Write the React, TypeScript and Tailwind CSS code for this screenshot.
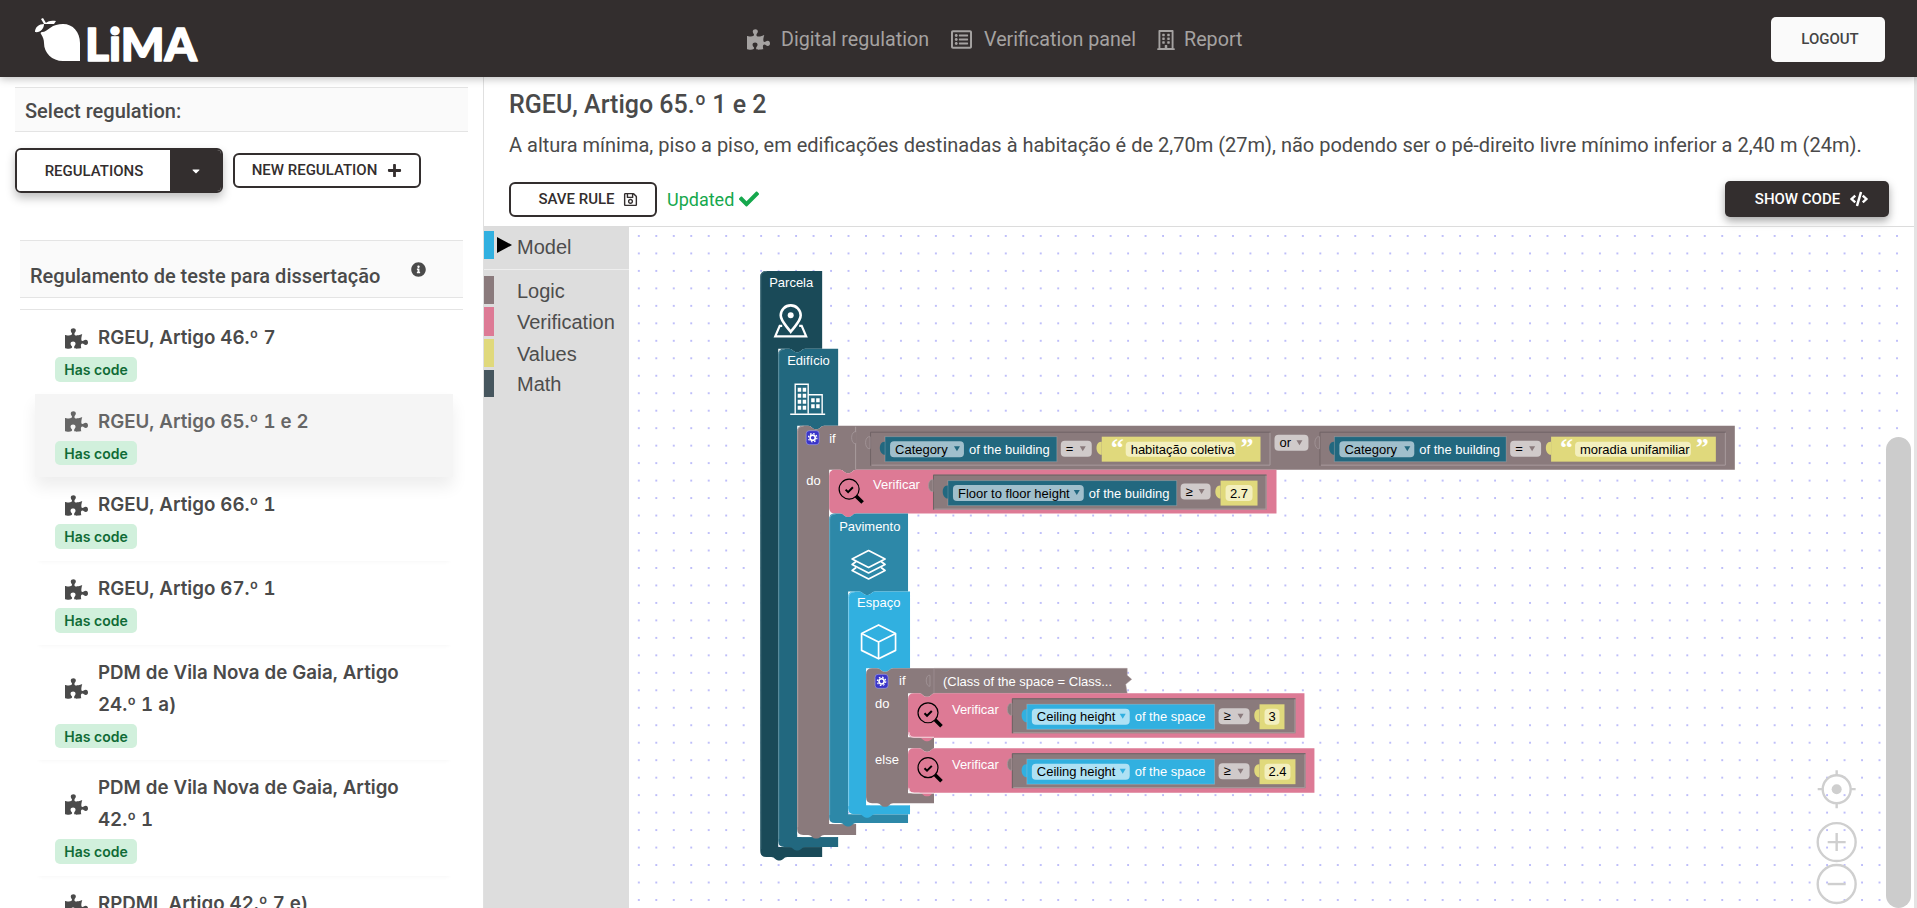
import React from 'react';
import { FaPuzzlePiece, FaRegListAlt, FaRegBuilding, FaPlus, FaInfoCircle, FaCaretDown, FaRegSave, FaCheck, FaCode } from 'react-icons/fa';

const LOGIC = '#8a7a7c';
const VERIFY = '#dd7a95';
const VALUE = '#e0d97c';
const DEEP = '#1a4a58';
const BUILDING = '#22687f';
const STOREY = '#2d88a8';
const SPACE = '#31b0e0';

const items = [
  { title: 'RGEU, Artigo 46.º 7' },
  { title: 'RGEU, Artigo 65.º 1 e 2', active: true },
  { title: 'RGEU, Artigo 66.º 1' },
  { title: 'RGEU, Artigo 67.º 1' },
  { title: 'PDM de Vila Nova de Gaia, Artigo 24.º 1 a)' },
  { title: 'PDM de Vila Nova de Gaia, Artigo 42.º 1' },
  { title: 'RPDML Artigo 42.º 7 e)' },
];

const toolbox = [
  { name: 'Logic', color: 'bg-[#8a7a7c]', h: 'h-[28px]' },
  { name: 'Verification', color: 'bg-[#dd7a95]', h: 'h-[29px]' },
  { name: 'Values', color: 'bg-[#e0d97c]', h: 'h-[28px]' },
  { name: 'Math', color: 'bg-[#46565e]', h: 'h-[27px]' },
];

// top edge notch and bottom tab of a statement block
const notch = 'q2.5 0 4 2 q1.5 1.5 3 1.5 h2 q1.5 0 3 -1.5 q1.5 -2 4 -2';
const tab = 'q-2.5 0 -4 2 q-1.5 1.5 -3 1.5 h-2 q-1.5 0 -3 -1.5 q-1.5 -2 -4 -2';

type CProps = { x: number; top: number; right: number; headBottom: number; inner: number; footTop: number; bottom: number; footRight: number; fill: string; hl: string; hat?: boolean };

const CBlock = ({ x, top, right, headBottom, inner, footTop, bottom, footRight, fill, hl, hat }: CProps) => (
  <g>
    <path
      d={`M${x + 6} ${top} ${hat ? '' : `H${x + 11} ${notch}`} H${right} V${headBottom} H${inner + 27} ${tab} H${inner} V${footTop} H${footRight} V${bottom} H${x + 27} ${tab} H${x + 6} Q${x} ${bottom} ${x} ${bottom - 6} V${top + 6} Q${x} ${top} ${x + 6} ${top} Z`}
      fill={fill}
    />
    <path d={`M${inner + 0.5} ${headBottom + 4} V${footTop - 4} q0 3.5 4 3.5 H${footRight - 1}`} fill="none" stroke="#fff" strokeOpacity="0.75" />
    <path d={`M${x + 0.5} ${bottom - 8} V${top + 6} q0 -5.5 6 -5.5`} fill="none" stroke={hl} />
  </g>
);

const Label = ({ x, y, children, fill = '#fff', size = 13 }: { x: number; y: number; children: React.ReactNode; fill?: string; size?: number }) => (
  <text x={x} y={y} fill={fill} fontSize={size} fontFamily="'Liberation Sans', Arial, sans-serif">
    {children}
  </text>
);

// grey frame that a value block sits in
const Frame = ({ x, y, w, h }: { x: number; y: number; w: number; h: number }) => (
  <g>
    <rect x={x} y={y} width={w} height={h} fill={LOGIC} />
    <path d={`M${x + 0.5} ${y + h} V${y + 0.5} H${x + w}`} fill="none" stroke="#6f6264" />
    <path d={`M${x + 1.5} ${y + h - 0.5} H${x + w - 0.5} V${y + 1}`} fill="none" stroke="#a99c9e" />
    <path d={`M${x} ${y + 5} c-6 -1 -6 13 0 12 Z`} fill={LOGIC} stroke="#a99c9e" strokeWidth="0.7" />
  </g>
);

const Arrow = ({ x, y, fill }: { x: number; y: number; fill: string }) => <polygon points={`${x - 3},${y - 2.5} ${x + 3},${y - 2.5} ${x},${y + 2.5}`} fill={fill} />;

const Variable = ({ x, w, y, field, fieldW, suffix, fill, fieldFill }: { x: number; w: number; y: number; field: string; fieldW: number; suffix: string; fill: string; fieldFill: string }) => (
  <g>
    <path d={`M${x} ${y + 5} c-7 -1 -7 13 0 13 Z`} fill={fill} />
    <rect x={x} y={y} width={w} height={25} fill={fill} stroke="#ffffff" strokeOpacity="0.18" />
    <rect x={x + 5} y={y + 4.5} width={fieldW} height={16} rx={4} fill={fieldFill} />
    <Label x={x + 10} y={y + 17} fill="#000">{field}</Label>
    <Arrow x={x + fieldW - 2} y={y + 12} fill={fill} />
    <Label x={x + fieldW + 10} y={y + 17}>{suffix}</Label>
  </g>
);

const Operator = ({ x, y, w, sign }: { x: number; y: number; w: number; sign: string }) => (
  <g>
    <rect x={x} y={y} width={w} height={16} rx={4} fill="#d0caca" />
    <Label x={x + 5} y={y + 12} fill="#000">{sign}</Label>
    <Arrow x={x + w - 9} y={y + 8} fill="#8a7a7c" />
  </g>
);

const TextValue = ({ x, w, y, text }: { x: number; w: number; y: number; text: string }) => (
  <g>
    <path d={`M${x} ${y + 5} c-7 -1 -7 13 0 13 Z`} fill={VALUE} />
    <rect x={x} y={y} width={w} height={25} fill={VALUE} />
    <text x={x + 9} y={y + 19} fill="#fff" fontSize="26" fontWeight="700" fontFamily="'Liberation Serif', serif">“</text>
    <rect x={x + 24} y={y + 5} width={w - 49} height={15} rx={4} fill="#f3efbe" />
    <Label x={x + 29} y={y + 17} fill="#000">{text}</Label>
    <text x={x + w - 20} y={y + 19} fill="#fff" fontSize="26" fontWeight="700" fontFamily="'Liberation Serif', serif">”</text>
  </g>
);

const NumValue = ({ x, w, y, text }: { x: number; w: number; y: number; text: string }) => (
  <g>
    <path d={`M${x} ${y + 5} c-7 -1 -7 13 0 13 Z`} fill={VALUE} />
    <rect x={x} y={y} width={w} height={25} fill={VALUE} />
    <rect x={x + 5} y={y + 4.5} width={w - 10} height={16} rx={4} fill="#f3efbe" />
    <text x={x + w / 2} y={y + 17} fill="#000" fontSize="13" textAnchor="middle" fontFamily="'Liberation Sans', Arial, sans-serif">{text}</text>
  </g>
);

const Gear = ({ x, y }: { x: number; y: number }) => (
  <g>
    <rect x={x} y={y} width={13} height={14} rx={3} fill="#3a35c9" stroke="#a8a4ee" strokeWidth="0.6" />
    <circle cx={x + 6.5} cy={y + 7} r={2.6} fill="none" stroke="#fff" strokeWidth="1.6" />
    <circle cx={x + 6.5} cy={y + 7} r={4.2} fill="none" stroke="#fff" strokeWidth="1.2" strokeDasharray="1.6 1.7" />
  </g>
);

const Magnifier = ({ x, y }: { x: number; y: number }) => (
  <g transform={`translate(${x} ${y})`} fill="none" stroke="#000">
    <circle cx={11} cy={10.5} r={10} strokeWidth="1.2" />
    <path d="M7.5 11 l2.5 2.5 l4.8 -4.8" strokeWidth="2" />
    <path d="M18 17.5 l6.5 6.5" strokeWidth="3.6" />
  </g>
);

const Verify = ({ top, right, frameW, valueW, value }: { top: number; right: number; frameW: number; valueW: number; value: string }) => (
  <g>
    <path
      d={`M914 ${top} H919 ${notch} H${right} V${top + 44.5} H935 ${tab} H914 Q908 ${top + 44.5} 908 ${top + 38.5} V${top + 6} Q908 ${top} 914 ${top} Z`}
      fill={VERIFY}
    />
    <Magnifier x={917} y={top + 9} />
    <Label x={952} y={top + 21}>Verificar</Label>
    <Frame x={1012} y={top + 5} w={frameW} h={35} />
    <Variable x={1027} w={188} y={top + 11} field="Ceiling height" fieldW={98} suffix="of the space" fill={SPACE} fieldFill="#aee1f4" />
    <Operator x={1219} y={top + 15} w={31} sign="≥" />
    <NumValue x={1260} w={valueW} y={top + 11} text={value} />
  </g>
);

const Blocks = () => (
  <svg className="block w-full h-full" viewBox="630 226 1284 682">
    <defs>
      <pattern id="dots" patternUnits="userSpaceOnUse" x="7.4" y="6.5" width="17.5" height="17.5">
        <circle cx="1" cy="1" r="0.8" fill="#6a6af2" />
      </pattern>
    </defs>
    <rect x="630" y="226" width="1284" height="682" fill="url(#dots)" />

    {/* Parcela */}
    <CBlock hat x={760} top={270} right={822} headBottom={348} inner={778} footTop={847} bottom={857} footRight={822} fill={DEEP} hl="#4b7480" />
    <Label x={769} y={286}>Parcela</Label>
    <g fill="none" stroke="#fff" strokeWidth="2.6">
      <path d="M790.5 331 c-6 -8 -10 -11 -10 -16.5 a10 10 0 0 1 20 0 c0 5.5 -4 8.5 -10 16.5 Z" />
      <circle cx="790.5" cy="314.5" r="3" fill="#fff" stroke="none" />
      <path d="M782 325 H779.5 L775 335.5 H806 L801.5 325 H799" strokeWidth="2.2" />
    </g>

    {/* Edificio */}
    <CBlock x={778} top={348} right={838} headBottom={425} inner={797} footTop={837} bottom={847} footRight={838} fill={BUILDING} hl="#5c8d9d" />
    <Label x={787} y={364}>Edifício</Label>
    <g fill="none" stroke="#fff" strokeWidth="1.4">
      <path d="M795 413 V383.5 H808 V413" />
      <path d="M808 394 H822 V413" />
      <path d="M790 413.5 H825" strokeWidth="1.6" />
    </g>
    <g fill="#fff">
      {[387, 393, 399, 405].map(y => (
        <g key={y}>
          <rect x="797.5" y={y} width="3.5" height="4" />
          <rect x="802.5" y={y} width="3.5" height="4" />
        </g>
      ))}
      {[397.5, 403.5].map(y => (
        <g key={y}>
          <rect x="811" y={y} width="3.5" height="4" />
          <rect x="816" y={y} width="3.5" height="4" />
        </g>
      ))}
    </g>

    {/* Se (edificio) */}
    <CBlock x={797} top={425} right={1736} headBottom={469} inner={829} footTop={824} bottom={835} footRight={856} fill={LOGIC} hl="#a99c9e" />
    <Gear x={806} y={430} />
    <Label x={829} y={442}>if</Label>
    <Label x={806} y={484}>do</Label>
    <path d="M855.5 426 V469" stroke="#a99c9e" fill="none" />
    <path d="M856 431 c-6 -1 -6 13 0 12" stroke="#a99c9e" fill={LOGIC} strokeWidth="0.7" />

    <Frame x={870} y={431} w={401} h={34} />
    <Variable x={885} w={172} y={436} field="Category" fieldW={74} suffix="of the building" fill={BUILDING} fieldFill="#a0bfcc" />
    <Operator x={1061} y={440} w={31} sign="=" />
    <TextValue x={1102} w={159} y={436} text="habitação coletiva" />
    <Operator x={1275} y={434} w={34} sign="or" />

    <Frame x={1320} y={431} w={407} h={34} />
    <Variable x={1335} w={172} y={436} field="Category" fieldW={75} suffix="of the building" fill={BUILDING} fieldFill="#a0bfcc" />
    <Operator x={1511} y={440} w={31} sign="=" />
    <TextValue x={1552} w={165} y={436} text="moradia unifamiliar" />

    {/* Verificar (edificio) */}
    <path
      d={`M835 469 H840 ${notch} H1277 V513 H856 ${tab} H835 Q829 513 829 507 V475 Q829 469 835 469 Z`}
      fill={VERIFY}
    />
    <Magnifier x={838} y={478} />
    <Label x={873} y={488}>Verificar</Label>
    <Frame x={933} y={474} w={334} h={35} />
    <Variable x={948} w={229} y={480} field="Floor to floor height" fieldW={131} suffix="of the building" fill={BUILDING} fieldFill="#a0bfcc" />
    <Operator x={1181} y={483} w={30} sign="≥" />
    <NumValue x={1221} w={37} y={480} text="2.7" />

    {/* Pavimento */}
    <CBlock x={829} top={513} right={908} headBottom={591} inner={848} footTop={814} bottom={823} footRight={908} fill={STOREY} hl="#64a8c0" />
    <Label x={839} y={530}>Pavimento</Label>
    <g fill="none" stroke="#fff" strokeWidth="1.7" strokeLinejoin="round">
      <path d="M868.5 550 L885 558.5 L868.5 567 L852 558.5 Z" />
      <path d="M856 561 L852 564 L868.5 572.5 L885 564 L881 561" />
      <path d="M856 567 L852 570 L868.5 578.5 L885 570 L881 567" />
    </g>

    {/* Espaco */}
    <CBlock x={848} top={591} right={910} headBottom={668} inner={866} footTop={805} bottom={814} footRight={910} fill={SPACE} hl="#7ccdeb" />
    <Label x={857} y={607}>Espaço</Label>
    <g fill="none" stroke="#fff" strokeWidth="1.7" strokeLinejoin="round">
      <path d="M878.5 624.5 L895.5 633 V650 L878.5 658.5 L861.5 650 V633 Z" />
      <path d="M861.5 633 L878.5 641.5 L895.5 633 M878.5 641.5 V658.5" />
    </g>

    {/* Se (espaco) */}
    <path
      d={`M872 668 H877 ${notch} H934 V693 H935 ${tab} H908 V737 H934 V748 H935 ${tab} H908 V793 H934 V803 H893 ${tab} H872 Q866 803 866 797 V674 Q866 668 872 668 Z`}
      fill={LOGIC}
    />
    <Gear x={875} y={674} />
    <Label x={899} y={685}>if</Label>
    <Label x={875} y={708}>do</Label>
    <Label x={875} y={764}>else</Label>
    <path d="M934 668 H1127.5 V675 L1132 679 L1126 684 L1127.5 693 H934 Z" fill={LOGIC} stroke="#a99c9e" strokeWidth="0.5" />
    <path d="M930 675 c-5 -1 -5 11 0 11 Z" fill={LOGIC} stroke="#a99c9e" strokeWidth="0.7" />
    <Label x={943} y={686}>(Class of the space = Class...</Label>

    <Verify top={693} right={1305} frameW={284} valueW={25} value="3" />
    <Verify top={748} right={1315} frameW={294} valueW={36} value="2.4" />
    <path d="M909 788 q0 5 5 5 H934" fill="none" stroke="#fff" strokeOpacity="0.75" />
    <path d="M909 732 q0 5 5 5 H934" fill="none" stroke="#fff" strokeOpacity="0.75" />

    {/* zoom controls */}
    <g fill="none" stroke="#cfcfcf" strokeWidth="2.4">
      <circle cx="1838" cy="789" r="14" />
      <circle cx="1838" cy="789" r="5" fill="#cfcfcf" stroke="none" />
      <path d="M1838 770 v5 M1838 803 v5 M1819 789 h5 M1852 789 h5" />
      <circle cx="1838" cy="842" r="19" />
      <path d="M1829 842 h18 M1838 833 v18" />
      <circle cx="1838" cy="884" r="19" />
      <path d="M1829 884 h18" />
    </g>
  </svg>
);

const Logo = () => (
  <svg width="175" height="64" viewBox="30 6 175 64" className="block">
    <path d="M63 23 c10 0 17 8 17 19 v18 h-17 c-11 0 -19 -8 -19 -18 c0 -3 -1 -6 -3 -9 c-1 -1 0 -2 1 -2 c3 0 5 -2 8 -4 c4 -3 8 -4 13 -4 Z" fill="#fff" />
    <path d="M35 31 c0 -5 4 -8 9 -8 c0 5 -4 9 -9 8 Z M44 23 l-3 -5 l2 -1 l3 5 Z M44 23 c4 -3 7 -4 12 -3 l-2 3 Z" fill="#fff" />
    <text x="85" y="59.5" fill="#fff" stroke="#fff" strokeWidth="1.6" strokeLinejoin="round" fontSize="46" fontWeight="900" fontFamily="Lato, 'Noto Sans', sans-serif">LiMA</text>
  </svg>
);

const NavLink = ({ icon, label, iconClass }: { icon: React.ReactNode; label: string; iconClass: string }) => (
  <a className="flex items-center text-[19.7px] text-[#a5a2a1]">
    <span className={iconClass}>{icon}</span>
    {label}
  </a>
);

const App: React.FC = () => {
  return (
    <div className="w-[1917px] h-[908px] overflow-hidden bg-white flex flex-col font-['Roboto',sans-serif] text-[#4a4a4a]">
      <header className="relative z-20 h-[77px] shrink-0 bg-[#332e2e] flex items-center pl-[30px] pr-[32px] shadow-[0_2px_8px_rgba(0,0,0,0.25)]">
        <Logo />
        <nav className="flex items-center ml-[542px] mt-[3px]">
          <NavLink icon={<FaPuzzlePiece className="text-[23px]" />} label="Digital regulation" iconClass="mr-[11px]" />
          <div className="w-[22px]"></div>
          <NavLink icon={<FaRegListAlt className="text-[21px]" />} label="Verification panel" iconClass="mr-[12px]" />
          <div className="w-[20px]"></div>
          <NavLink icon={<FaRegBuilding className="text-[20px]" />} label="Report" iconClass="mr-[8px]" />
        </nav>
        <button className="ml-auto mt-[1px] w-[114px] h-[45px] pl-[4px] rounded-[5px] bg-[#fafafa] text-[15px] font-medium text-[#444]">LOGOUT</button>
      </header>

      <div className="flex flex-1 min-h-0">
        <aside className="w-[483px] shrink-0 overflow-hidden">
          <div className="mx-[15px] mt-[10px] h-[45px] flex items-center pl-[10px] pt-[2px] bg-[#fafafa] border-y border-[#e4e4e4] text-[20px] font-medium">Select regulation:</div>
          <div className="mx-[15px] mt-[16px] flex items-center gap-[10px]">
            <div className="flex w-[208px] h-[45px] rounded-md border-2 border-[#332e2e] overflow-hidden shadow-[0_5px_10px_rgba(0,0,0,0.25)]">
              <button className="w-[153px] pt-[1px] pl-[1px] bg-white text-[15px] font-medium text-[#332e2e]">REGULATIONS</button>
              <span className="flex-1 bg-[#332e2e] flex items-center justify-center text-white text-[12px]"><FaCaretDown /></span>
            </div>
            <button className="w-[188px] h-[35px] rounded-md border-2 border-[#332e2e] flex items-center justify-center gap-[10px] text-[15px] font-medium text-[#332e2e]">
              NEW REGULATION <FaPlus className="text-[15px]" />
            </button>
          </div>
          <div className="mx-[20px] mt-[47px] h-[58px] relative flex items-end pb-[6px] pl-[10px] bg-[#fafafa] border-y border-[#e4e4e4] text-[20px] font-medium">
            Regulamento de teste para dissertação
            <FaInfoCircle className="absolute left-[391px] top-[21px] text-[15px]" />
          </div>
          <div className="mx-[20px] mt-[11px] border-t border-[#e4e4e4]"></div>
          <ul className="ml-[35px] mr-[30px]">
            {items.map(item => (
              <li
                key={item.title}
                className={
                  item.active
                    ? 'relative z-10 pt-[12px] pb-[12px] pl-[20px] bg-[#f5f5f5] text-[#666] shadow-[0_10px_15px_rgba(0,0,0,0.07)]'
                    : 'pt-[12px] pb-[12px] pl-[20px] text-[#4a4a4a] shadow-[0_4px_5px_-4px_rgba(0,0,0,0.05)]'
                }
              >
                <div className="flex items-center pl-[10px] pr-[40px]">
                  <FaPuzzlePiece className="text-[23px] shrink-0 mr-[10px]" />
                  <span className="font-['Inter',sans-serif] font-semibold text-[18.72px] leading-[32px] tabular-nums">{item.title}</span>
                </div>
                <span className="mt-[3px] flex items-center justify-center w-[82px] h-[24.7px] rounded-[5px] bg-[#d1f0dc] font-['Inter',sans-serif] font-semibold text-[14px] text-[#0f6b36]">Has code</span>
              </li>
            ))}
          </ul>
        </aside>

        <main className="flex-1 min-w-0 flex flex-col border-l border-r-[3px] border-l-[#e0e0e0] border-r-[#e4e4e4]">
          <div className="h-[149px] shrink-0 pl-[25px] pr-[25px] flex flex-col">
            <h2 className="mt-[12px] text-[25px] leading-[32px] font-medium">RGEU, Artigo 65.º 1 e 2</h2>
            <p className="mt-[10px] text-[20px] leading-[28px] whitespace-nowrap">A altura mínima, piso a piso, em edificações destinadas à habitação é de 2,70m (27m), não podendo ser o pé-direito livre mínimo inferior a 2,40 m (24m).</p>
            <div className="mt-[22px] flex items-center">
              <button className="w-[148px] h-[35px] pl-[10px] rounded-md border-2 border-[#332e2e] flex items-center justify-center gap-[8px] text-[15px] font-medium text-[#332e2e]">
                SAVE RULE <FaRegSave className="text-[15px]" />
              </button>
              <span className="ml-[10px] text-[18px] text-[#16a84d]">Updated</span>
              <FaCheck className="ml-[5px] text-[20px] text-[#16a84d]" />
              <button className="ml-auto w-[164px] h-[36px] pl-[9px] rounded-[5px] bg-[#332e2e] text-white text-[15px] font-medium flex items-center justify-center gap-[10px] shadow-[0_4px_8px_rgba(0,0,0,0.35)]">
                SHOW CODE <FaCode className="text-[18px]" />
              </button>
            </div>
          </div>

          <div className="relative flex-1 min-h-0 flex border-t border-[#dcdcdc]">
            <div className="w-[145px] shrink-0 bg-[#dddddd] text-[20px] text-[#4d4d4d] font-['Liberation_Sans',Arial,sans-serif]">
              <div className="mt-[4px] h-[39px] flex pb-[10px] border-b border-[#eeeeee]">
                <span className="w-[10px] h-[28px] bg-[#31b0e0]"></span>
                <span className="ml-[3px] mt-[6px] border-y-[8px] border-l-[15px] border-y-transparent border-l-black h-0 w-0"></span>
                <span className="ml-[5px] leading-[32px]">Model</span>
              </div>
              <div className="mt-[6px] flex flex-col gap-[3px]">
                {toolbox.map(t => (
                  <div key={t.name} className="flex items-center">
                    <span className={`w-[10px] ${t.h} ${t.color}`}></span>
                    <span className="ml-[23px] pt-[1px] leading-[24px]">{t.name}</span>
                  </div>
                ))}
              </div>
            </div>
            <div className="flex-1 min-w-0">
              <Blocks />
            </div>
            <div className="absolute right-[3px] top-[210px] bottom-0 w-[25px] rounded-full bg-[#cccccc]"></div>
          </div>
        </main>
      </div>
    </div>
  );
};

export default App;
